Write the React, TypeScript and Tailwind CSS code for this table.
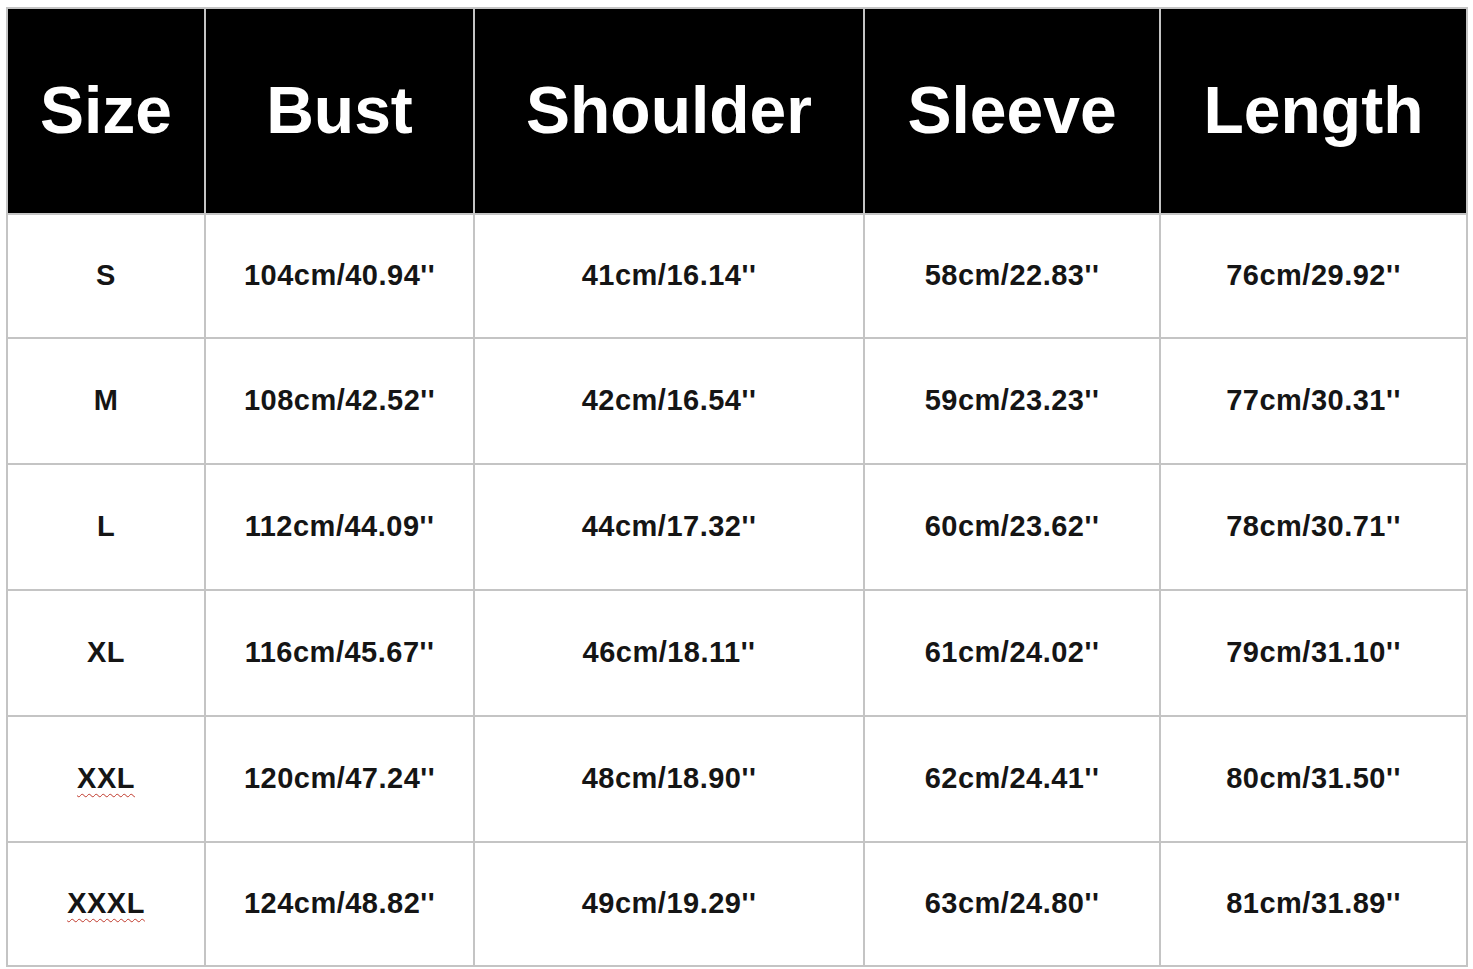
import React from "react";

type Row = {
    size: string;
    bust: string;
    shoulder: string;
    sleeve: string;
    length: string;
    flagged?: boolean;
};

const ROWS: Row[] = [
    { size: "S", bust: "104cm/40.94''", shoulder: "41cm/16.14''", sleeve: "58cm/22.83''", length: "76cm/29.92''" },
    { size: "M", bust: "108cm/42.52''", shoulder: "42cm/16.54''", sleeve: "59cm/23.23''", length: "77cm/30.31''" },
    { size: "L", bust: "112cm/44.09''", shoulder: "44cm/17.32''", sleeve: "60cm/23.62''", length: "78cm/30.71''" },
    { size: "XL", bust: "116cm/45.67''", shoulder: "46cm/18.11''", sleeve: "61cm/24.02''", length: "79cm/31.10''" },
    { size: "XXL", bust: "120cm/47.24''", shoulder: "48cm/18.90''", sleeve: "62cm/24.41''", length: "80cm/31.50''", flagged: true },
    { size: "XXXL", bust: "124cm/48.82''", shoulder: "49cm/19.29''", sleeve: "63cm/24.80''", length: "81cm/31.89''", flagged: true },
];

const HEADERS = ["Size", "Bust", "Shoulder", "Sleeve", "Length"];

const cell =
    "border-2 border-[#c4c4c4] text-center align-middle text-[29px] font-bold tracking-[0.5px] text-[#151515]";

export default function App() {
    return (
        <div className="w-[1473px] h-[969px] bg-white pl-[6px] pt-[7px] font-['Liberation_Sans',Arial,sans-serif]">
            <table className="border-collapse table-fixed w-[1460px]">
                <colgroup>
                    <col className="w-[198px]" />
                    <col className="w-[269px]" />
                    <col className="w-[390px]" />
                    <col className="w-[296px]" />
                    <col className="w-[307px]" />
                </colgroup>
                <thead>
                    <tr className="h-[206px] bg-black">
                        {HEADERS.map((h) => (
                            <th
                                key={h}
                                className="border-2 border-[#c4c4c4] text-center align-middle text-white text-[66px] font-bold leading-none pb-[2px]"
                            >
                                {h}
                            </th>
                        ))}
                    </tr>
                </thead>
                <tbody>
                    {ROWS.map((r, i) => (
                        <tr
                            key={r.size}
                            className={i === 0 || i === ROWS.length - 1 ? "h-[124px]" : "h-[126px]"}
                        >
                            <td className={cell}>
                                <span
                                    className={
                                        r.flagged
                                            ? "underline decoration-wavy decoration-[#c0392b] decoration-1 underline-offset-[5px]"
                                            : ""
                                    }
                                >
                                    {r.size}
                                </span>
                            </td>
                            <td className={cell}>{r.bust}</td>
                            <td className={cell}>{r.shoulder}</td>
                            <td className={cell}>{r.sleeve}</td>
                            <td className={cell}>{r.length}</td>
                        </tr>
                    ))}
                </tbody>
            </table>
        </div>
    );
}
